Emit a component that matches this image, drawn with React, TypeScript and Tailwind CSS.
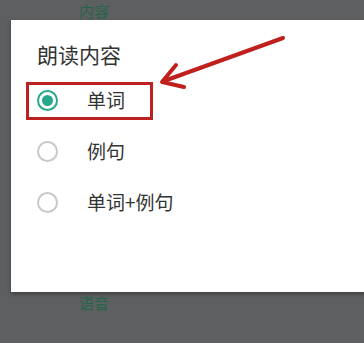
import React from 'react';

const options = ['单词', '例句', '单词+例句'];

function Radio({ checked }: { checked?: boolean }) {
  if (checked) {
    return (
      <span className="flex h-[21px] w-[21px] shrink-0 items-center justify-center rounded-full border-[2px] border-[#26a98b]">
        <span className="h-[11px] w-[11px] rounded-full bg-[#26a98b]" />
      </span>
    );
  }
  return <span className="block h-[21px] w-[21px] shrink-0 rounded-full border-[2px] border-[#c8c8c8]" />;
}

export default function App() {
  return (
    <div
      className="relative h-[343px] w-[364px] overflow-hidden bg-[#5e5f61]"
      style={{ fontFamily: '"Noto Sans CJK SC", "Noto Sans", sans-serif' }}
    >
      <div className="flex h-[20px] items-center pl-[79px] text-[15px] leading-none text-[#24654b]">内容</div>

      <div className="ml-[11px] h-[272px] w-[360px] bg-white shadow-[0_2px_4px_rgba(0,0,0,0.35)]">
        <h2 className="pl-[26px] pt-[22px] text-[21px] leading-[24px] text-[#333333]">朗读内容</h2>

        <ul className="mt-[9px] flex flex-col">
          {options.map((label, i) => (
            <li key={label} className="flex h-[51px] items-center">
              <div
                className={
                  i === 0
                    ? 'ml-[15px] flex h-[38px] w-[127px] items-center border-[3px] border-[#bd2020] pl-[8px]'
                    : 'ml-[15px] flex h-[38px] items-center border-[3px] border-transparent pl-[8px]'
                }
              >
                <Radio checked={i === 0} />
                <span className="ml-[29px] whitespace-nowrap text-[19px] text-[#333333]">{label}</span>
              </div>
            </li>
          ))}
        </ul>
      </div>

      <div className="flex h-[20px] items-center pl-[79px] text-[15px] leading-none text-[#24654b]">语音</div>

      {/* annotation arrow */}
      <svg className="absolute left-0 top-0" width="364" height="343" viewBox="0 0 364 343">
        <g stroke="#c0201c" strokeWidth="4" strokeLinecap="round" fill="none">
          <line x1="283" y1="38" x2="164" y2="81" />
          <polyline points="176,65 162,82 184,87" strokeLinejoin="round" />
        </g>
      </svg>
    </div>
  );
}
